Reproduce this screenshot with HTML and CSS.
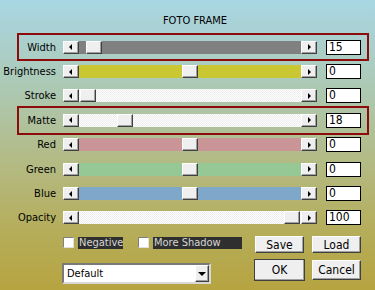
FILE: index.html
```html
<!DOCTYPE html>
<html lang="en">
<head>
    <meta charset="UTF-8">
    <title>Foto Frame</title>
    <link rel="stylesheet" href="styles.css">
</head>
<body>

<div class="title">FOTO FRAME</div>

<div class="rows">
    <div class="row marked">
        <div class="label"><span>Width</span></div>
        <div class="slider">
            <span class="arrow left"></span>
            <div class="track gray"><span class="thumb" style="margin-left:7px"></span></div>
            <span class="arrow right"></span>
        </div>
        <div class="value">15</div>
    </div>
    <div class="row">
        <div class="label"><span>Brightness</span></div>
        <div class="slider">
            <span class="arrow left"></span>
            <div class="track yellow"><span class="thumb" style="margin-left:103px"></span></div>
            <span class="arrow right"></span>
        </div>
        <div class="value">0</div>
    </div>
    <div class="row">
        <div class="label"><span>Stroke</span></div>
        <div class="slider">
            <span class="arrow left"></span>
            <div class="track dots"><span class="thumb" style="margin-left:1px"></span></div>
            <span class="arrow right"></span>
        </div>
        <div class="value">0</div>
    </div>
    <div class="row marked">
        <div class="label"><span>Matte</span></div>
        <div class="slider">
            <span class="arrow left"></span>
            <div class="track dots"><span class="thumb" style="margin-left:38px"></span></div>
            <span class="arrow right"></span>
        </div>
        <div class="value">18</div>
    </div>
    <div class="row">
        <div class="label"><span>Red</span></div>
        <div class="slider">
            <span class="arrow left"></span>
            <div class="track red"><span class="thumb" style="margin-left:103px"></span></div>
            <span class="arrow right"></span>
        </div>
        <div class="value">0</div>
    </div>
    <div class="row">
        <div class="label"><span>Green</span></div>
        <div class="slider">
            <span class="arrow left"></span>
            <div class="track green"><span class="thumb" style="margin-left:103px"></span></div>
            <span class="arrow right"></span>
        </div>
        <div class="value">0</div>
    </div>
    <div class="row">
        <div class="label"><span>Blue</span></div>
        <div class="slider">
            <span class="arrow left"></span>
            <div class="track blue"><span class="thumb" style="margin-left:103px"></span></div>
            <span class="arrow right"></span>
        </div>
        <div class="value">0</div>
    </div>
    <div class="row">
        <div class="label"><span>Opacity</span></div>
        <div class="slider">
            <span class="arrow left"></span>
            <div class="track dots"><span class="thumb" style="margin-left:205px"></span></div>
            <span class="arrow right"></span>
        </div>
        <div class="value">100</div>
    </div>
</div>

<div class="bottom">
    <div class="left-col">
        <div class="checks">
            <span class="checkbox"></span>
            <span class="check-label neg">Negative</span>
            <span class="checkbox"></span>
            <span class="check-label shadow">More Shadow</span>
        </div>
        <div class="combo">
            <span class="combo-text">Default</span>
            <span class="combo-btn"><span class="down"></span></span>
        </div>
    </div>
    <div class="buttons">
        <button class="btn small">Save</button>
        <button class="btn small">Load</button>
        <button class="btn big default">OK</button>
        <button class="btn big">Cancel</button>
    </div>
</div>

</body>
</html>
```

FILE: styles.css
```css
body {
    margin: 0;
    width: 375px;
    height: 290px;
    overflow: hidden;
    font-family: "DejaVu Sans Condensed", "Liberation Sans", sans-serif;
    font-size: 11px;
    color: #000;
    background: linear-gradient(#a9d6e4 0%, #acc9b4 30%, #b3bb86 55%, #b5ad5a 80%, #b6a440 100%);
}

.title {
    height: 13px;
    line-height: 13px;
    padding: 14px 0 0 15px;
    margin-bottom: 8px;
    text-align: center;
}

.rows {
    display: grid;
    grid-auto-rows: 24.4px;
}

.row {
    display: flex;
    align-items: center;
    margin: 0 8px 0 19px;
}

.row.marked {
    outline: 2px solid #8e0b0b;
}

.label {
    flex: 0 0 37px;
    min-width: 0;
    display: flex;
    justify-content: flex-end;
    white-space: nowrap;
}

.label span {
    flex-shrink: 0;
}

.slider {
    display: flex;
    flex-shrink: 0;
    width: 254px;
    height: 13px;
    margin-left: 7px;
}

/* raised windows style parts */
.arrow, .thumb, .btn, .combo-btn {
    box-sizing: border-box;
    background-color: #efefef;
    border: 1px solid;
    border-color: #fff #404040 #404040 #fff;
    box-shadow: inset -1px -1px #a0a0a0;
}

.arrow {
    flex: 0 0 16px;
    display: flex;
    align-items: center;
    justify-content: center;
}

.arrow::before {
    content: "";
    border-top: 3px solid transparent;
    border-bottom: 3px solid transparent;
}

.arrow.left::before {
    border-right: 3px solid #000;
    margin-right: 2px;
}

.arrow.right::before {
    border-left: 3px solid #000;
}

.track {
    flex: 1;
    display: flex;
}

.thumb {
    width: 16px;
    height: 13px;
    flex-shrink: 0;
}

.gray { background: #808080; }
.yellow { background: #c9c832; }
.red { background: #c99597; }
.green { background: #96c896; }
.blue { background: #7fa7c9; }
.dots {
    background: repeating-conic-gradient(#fff 0 25%, #ececec 0 50%) 0 0 / 2px 2px;
}

.value {
    box-sizing: border-box;
    flex-shrink: 0;
    width: 35px;
    height: 15px;
    margin-left: 9px;
    padding-left: 2px;
    line-height: 13px;
    font-size: 12px;
    background: #fff;
    border: 1px solid #000;
}

.bottom {
    display: flex;
    margin-top: 6px;
    padding-left: 63px;
}

.left-col {
    width: 191px;
}

.checks {
    display: flex;
    height: 17px;
    padding-top: 1px;
    box-sizing: border-box;
}

.checkbox {
    box-sizing: border-box;
    width: 11px;
    height: 11px;
    background: #fff;
    border: 1px solid;
    border-color: #808080 #e0e0e0 #e0e0e0 #808080;
}

.check-label {
    height: 12px;
    line-height: 12px;
    margin-left: 4px;
    padding-left: 1px;
    background: #2f2f2f;
    color: #d6d6d6;
    white-space: nowrap;
}

.neg {
    width: 44px;
    margin-right: 15px;
}

.shadow {
    width: 88px;
}

.combo {
    box-sizing: border-box;
    display: flex;
    align-items: center;
    width: 149px;
    height: 21px;
    margin: 10px 0 0 -1px;
    background: #fff;
    border: 2px solid;
    border-color: #7a7a7a #d8d8d8 #d8d8d8 #7a7a7a;
}

.combo-text {
    flex: 1;
    padding-left: 3px;
}

.combo-btn {
    width: 14px;
    height: 17px;
    display: flex;
    align-items: center;
    justify-content: center;
}

.down {
    border-left: 4px solid transparent;
    border-right: 4px solid transparent;
    border-top: 4px solid #000;
}

.buttons {
    display: grid;
    grid-template-columns: 51px 49px;
    grid-template-rows: 17px 22px;
    column-gap: 7px;
    row-gap: 6px;
}

.btn {
    padding: 0;
    font: inherit;
    font-size: 12px;
    color: #000;
}

.btn.small {
    width: 49px;
    height: 17px;
}

.btn.big {
    width: 49px;
    height: 20px;
    align-self: center;
}

.btn.default {
    width: 51px;
    height: 22px;
    outline: 1px solid #404040;
    outline-offset: -1px;
    border-color: #fff #404040 #404040 #fff;
}

.buttons .small:first-child {
    margin-left: 1px;
}
```
